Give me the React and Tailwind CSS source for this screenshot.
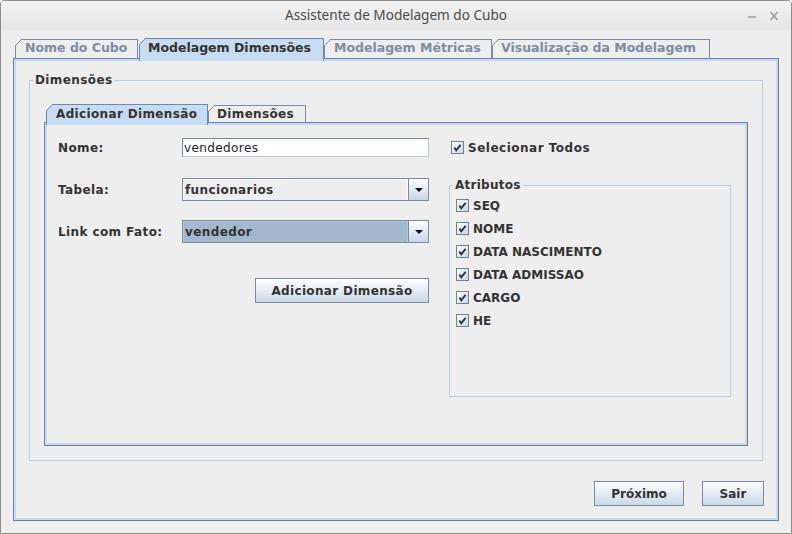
import React from "react";

const DV = { fontFamily: '"DejaVu Sans", "Liberation Sans", sans-serif' };

function Corner({ fill, stroke }) {
  return (
    <svg width="7" height="7" viewBox="0 0 7 7" className="absolute -left-px -top-px">
      <polygon points="0,0 7,0 0,7" fill={fill} />
      <line x1="0" y1="7" x2="7" y2="0" stroke={stroke} strokeWidth="1" />
    </svg>
  );
}

function CheckBox() {
  return (
    <svg width="13" height="13" viewBox="0 0 13 13" className="shrink-0">
      <defs>
        <linearGradient id="cbg" x1="0" y1="0" x2="1" y2="1">
          <stop offset="0" stopColor="#ffffff" />
          <stop offset="1" stopColor="#c3d4e7" />
        </linearGradient>
      </defs>
      <rect x="0.5" y="0.5" width="12" height="12" fill="url(#cbg)" stroke="#6f8199" />
      <path d="M3.4 6.6 L5.2 9.4 L9.6 3.8" stroke="#333333" strokeWidth="1.9" fill="none" />
    </svg>
  );
}

function Arrow() {
  return (
    <svg width="8" height="4" viewBox="0 0 8 4">
      <polygon points="0,0 8,0 4,4" fill="#111111" />
    </svg>
  );
}

export default function App() {
  return (
    <div
      style={DV}
      className="w-[792px] h-[534px] bg-[#eeeeee] border border-[#8e8e8e] rounded-t-[4px] flex flex-col overflow-hidden"
    >
      {/* title bar */}
      <div className="h-[29px] shrink-0 flex items-center bg-linear-to-b from-[#f2f2f2] to-[#e6e6e6]">
        <div className="w-[60px]" />
        <div
          className="flex-1 text-center text-[13.6px] text-[#4b4b4b]"
          style={{ fontFamily: '"Noto Sans", "DejaVu Sans", sans-serif' }}
        >
          Assistente de Modelagem do Cubo
        </div>
        <div className="w-[60px] flex items-center justify-end gap-[12px] pr-[12px]">
          <svg width="10" height="10" viewBox="0 0 10 10">
            <line x1="1" y1="6" x2="9" y2="6" stroke="#9a9a9a" strokeWidth="1.6" />
          </svg>
          <svg width="10" height="10" viewBox="0 0 10 10">
            <line x1="1.5" y1="1" x2="8.5" y2="9" stroke="#9a9a9a" strokeWidth="1.5" />
            <line x1="8.5" y1="1" x2="1.5" y2="9" stroke="#9a9a9a" strokeWidth="1.5" />
          </svg>
        </div>
      </div>

      {/* body */}
      <div className="flex-1 pl-[12px] pr-[12px] pt-[8px]">
        {/* outer tabs */}
        <div className="h-[20px] flex items-end">
          <div className="relative ml-[2px] w-[123px] h-[19px] border-l border-t border-r border-[#7b8aa3] bg-[#eeeeee] pl-[9px] text-[12.5px] leading-[16px] font-bold text-[#7c8ca4] whitespace-nowrap">
            <Corner fill="#eeeeee" stroke="#7b8aa3" />
            Nome do Cubo
          </div>
          <div className="relative z-10 ml-[1px] w-[185px] h-[23px] -mb-[3px] border-l border-t border-r border-[#6f87b4] bg-[#c7dbf1] pt-[1px] pl-[8px] text-[12.5px] leading-[16px] font-bold text-[#333333] whitespace-nowrap">
            <Corner fill="#eeeeee" stroke="#6f87b4" />
            Modelagem Dimensões
          </div>
          <div className="relative w-[168px] h-[19px] border-l border-t border-r border-[#7b8aa3] bg-[#eeeeee] pl-[9px] text-[12.5px] leading-[16px] font-bold text-[#7c8ca4] whitespace-nowrap">
            <Corner fill="#eeeeee" stroke="#7b8aa3" />
            Modelagem Métricas
          </div>
          <div className="relative w-[218px] h-[19px] border-l border-t border-r border-[#7b8aa3] bg-[#eeeeee] pl-[8px] text-[12.5px] leading-[16px] font-bold text-[#7c8ca4] whitespace-nowrap">
            <Corner fill="#eeeeee" stroke="#7b8aa3" />
            Visualização da Modelagem
          </div>
        </div>

        {/* outer content */}
        <div className="h-[463px] border border-t-[#6382bf] border-l-[#6382bf] border-r-[#6b7d95] border-b-[#6b7d95]">
          <div className="h-full border-2 border-[#c8daef] flex flex-col px-[13px] pt-[11px]">
            <fieldset className="h-[389px] border border-[#b7cfe6] min-w-0">
              <legend className="ml-[3px] px-[2px] text-[12px] leading-[16px] font-bold text-[#333333] tracking-[0.4px]">
                Dimensões
              </legend>
              <div className="px-[14px] pt-[16px]">
                {/* inner tabs */}
                <div className="h-[18px] flex items-end pl-[2px] tracking-[0.35px]">
                  <div className="relative z-10 w-[162px] h-[21px] -mb-[3px] border-l border-t border-r border-[#6f87b4] bg-[#c7dbf1] pt-[1px] pl-[9px] text-[12px] leading-[16px] font-bold text-[#333333] whitespace-nowrap">
                    <Corner fill="#eeeeee" stroke="#6f87b4" />
                    Adicionar Dimensão
                  </div>
                  <div className="relative w-[98px] h-[17px] border-l border-t border-r border-[#7b8aa3] bg-[#eeeeee] pl-[8px] text-[12px] leading-[16px] font-bold text-[#333333] whitespace-nowrap">
                    <Corner fill="#eeeeee" stroke="#7b8aa3" />
                    Dimensões
                  </div>
                </div>

                {/* inner content */}
                <div className="h-[324px] border border-t-[#6382bf] border-l-[#6382bf] border-r-[#6b7d95] border-b-[#6b7d95]">
                  <div className="h-full border-2 border-[#c8daef] pl-[11px] pt-[13px] flex text-[12px] text-[#333333] tracking-[0.4px]">
                    {/* left column */}
                    <div className="w-[371px] flex flex-col font-bold">
                      <div className="h-[19px] flex items-center">
                        <div className="w-[124px] pt-[1px]">Nome:</div>
                        <div className="w-[247px] h-[19px] bg-white border border-[#7a8aa0] border-b-[#b9c6d4] border-r-[#b9c6d4] pl-[1px] pt-[1px] leading-[16px] font-normal text-[#222222]">
                          vendedores
                        </div>
                      </div>
                      <div className="mt-[21px] h-[23px] flex items-center">
                        <div className="w-[124px]">Tabela:</div>
                        <div className="w-[247px] h-[23px] flex border border-[#7a8aa0]">
                          <div className="flex-1 bg-[#eeeeee] border-t border-l border-r border-white flex items-center pl-[1px]">
                            funcionarios
                          </div>
                          <div className="w-[20px] border-l border-[#7a8aa0] bg-linear-to-b from-[#ffffff] to-[#c6d6e8] flex items-center justify-center">
                            <Arrow />
                          </div>
                        </div>
                      </div>
                      <div className="mt-[19px] h-[23px] flex items-center">
                        <div className="w-[124px]">Link com Fato:</div>
                        <div className="w-[247px] h-[23px] flex border border-[#7a8aa0]">
                          <div className="flex-1 bg-[#a3b8cd] border-t border-l border-r border-[#b9c8d8] flex items-center pl-[1px]">
                            vendedor
                          </div>
                          <div className="w-[20px] border-l border-[#7a8aa0] bg-linear-to-b from-[#ffffff] to-[#c6d6e8] flex items-center justify-center">
                            <Arrow />
                          </div>
                        </div>
                      </div>
                      <div className="mt-[35px] flex justify-end">
                        <button className="w-[174px] h-[25px] border border-[#7a8aa0] bg-linear-to-b from-[#ffffff] to-[#cad9e8] font-bold text-[12px] text-[#333333] tracking-[0.35px]">
                          Adicionar Dimensão
                        </button>
                      </div>
                    </div>

                    {/* right column */}
                    <div className="ml-[20px] w-[282px] flex flex-col font-bold">
                      <div className="h-[19px] flex items-center gap-[4px] pl-[2px] tracking-[0.5px]">
                        <CheckBox />
                        Selecionar Todos
                      </div>
                      <fieldset className="mt-[20px] h-[220px] border border-[#b7cfe6] min-w-0">
                        <legend className="ml-[3px] px-[2px] leading-[16px] tracking-[0.25px]">Atributos</legend>
                        <div className="pt-[1px] pl-[6px] flex flex-col tracking-normal">
                          {["SEQ", "NOME", "DATA NASCIMENTO", "DATA ADMISSAO", "CARGO", "HE"].map((a) => (
                            <div key={a} className="h-[23px] flex items-center gap-[4px]">
                              <CheckBox />
                              {a}
                            </div>
                          ))}
                        </div>
                      </fieldset>
                    </div>
                  </div>
                </div>
              </div>
            </fieldset>

            <div className="mt-[20px] -mr-[1px] flex justify-end gap-[18px]">
              <button className="w-[90px] h-[25px] border border-[#7a8aa0] bg-linear-to-b from-[#ffffff] to-[#cad9e8] font-bold text-[12px] text-[#333333]">
                Próximo
              </button>
              <button className="w-[62px] h-[25px] border border-[#7a8aa0] bg-linear-to-b from-[#ffffff] to-[#cad9e8] font-bold text-[12px] text-[#333333]">
                Sair
              </button>
            </div>
          </div>
        </div>
      </div>
    </div>
  );
}
